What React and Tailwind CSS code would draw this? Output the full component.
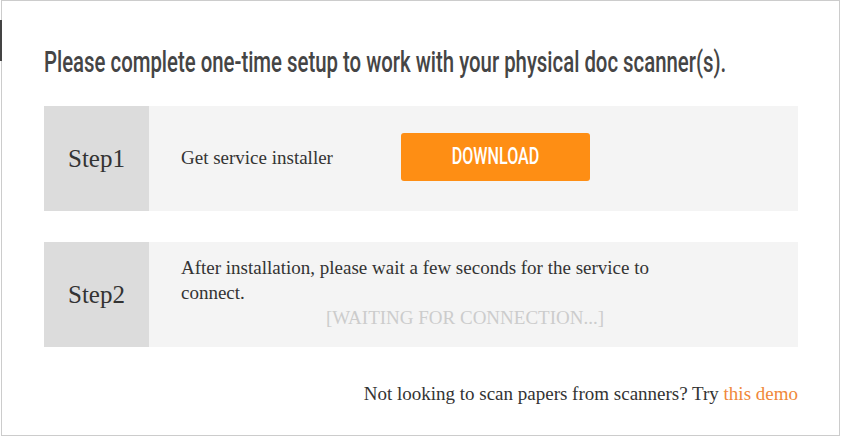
import React from 'react';

const SERIF = { fontFamily: '"Liberation Serif", "Times New Roman", serif' };
const NARROW = { fontFamily: 'Roboto, "Liberation Sans", sans-serif' };

const StepRow = ({ label, children }) => (
  <div className="flex h-[105px] bg-[#f4f4f4]">
    <div className="w-[105px] shrink-0 bg-[#dcdcdc] flex items-center justify-center text-[25px] text-[#333]">
      {label}
    </div>
    <div className="flex-1 min-w-0 pl-[32px] flex items-center">{children}</div>
  </div>
);

export default function App() {
  return (
    <div className="w-[841px] h-[437px] bg-white relative overflow-hidden" style={SERIF}>
      <div className="absolute left-0 top-[20px] w-[2px] h-[41px] bg-[#444]" />
      <div className="ml-px w-[839px] h-[436px] border border-[#cccccc] pl-[42px] pr-[41px]">
        <h1
          className="pt-[43px] h-[105px] overflow-hidden text-[29px] leading-[36px] font-medium text-[#454545] whitespace-nowrap"
          style={NARROW}
        >
          <span className="inline-block origin-left scale-x-[0.702]">
            Please complete one-time setup to work with your physical doc scanner(s).
          </span>
        </h1>

        <StepRow label="Step1">
          <span className="text-[19px] text-[#333] w-[220px]">Get service installer</span>
          <button
            type="button"
            className="w-[189px] h-[48px] -mt-[4px] rounded-[3px] bg-[#fe8e14] text-white text-[23px] font-medium leading-none flex items-center justify-center"
            style={NARROW}
          >
            <span className="inline-block scale-x-[0.7]">DOWNLOAD</span>
          </button>
        </StepRow>

        <div className="h-[31px]" />

        <StepRow label="Step2">
          <div className="w-[568px] pb-[4px] text-[19px] leading-[25px] text-[#333]">
            <p className="w-[520px]">After installation, please wait a few seconds for the service to connect.</p>
            <p className="text-center text-[#cccccc]">[WAITING FOR CONNECTION...]</p>
          </div>
        </StepRow>

        <div className="pt-[33px] text-right text-[19px] text-[#333]">
          Not looking to scan papers from scanners? Try{' '}
          <a href="#" className="text-[#f0883a]">this demo</a>
        </div>
      </div>
    </div>
  );
}
